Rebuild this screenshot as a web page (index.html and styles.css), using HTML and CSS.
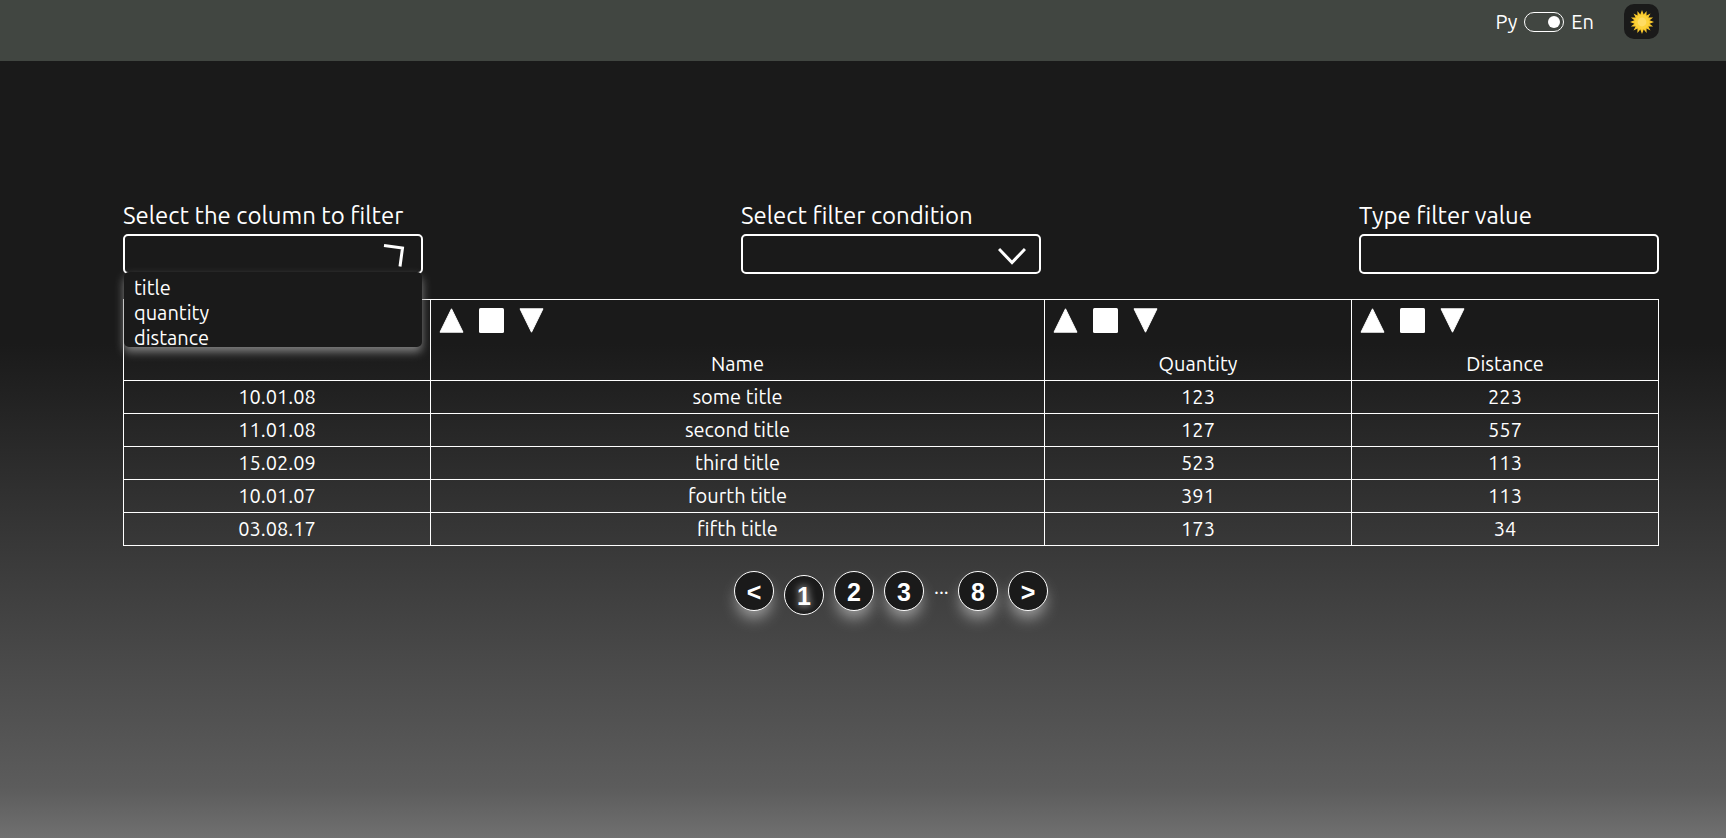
FILE: index.html
```
<!DOCTYPE html>
<html lang="en">
<head>
<meta charset="utf-8">
<title>Table</title>
<link rel="stylesheet" href="styles.css">
</head>
<body>
<svg class="sprite" aria-hidden="true">
  <symbol id="up" viewBox="0 0 25 25"><path d="M12.5 .8 24 24.2H1Z" fill="#fff" stroke="#fff" stroke-width="1" stroke-linejoin="round"/></symbol>
  <symbol id="square" viewBox="0 0 25 25"><rect width="25" height="25" rx="1.5" fill="#fff"/></symbol>
  <symbol id="down" viewBox="0 0 25 25"><path d="M12.5 24.2 24 .8H1Z" fill="#fff" stroke="#fff" stroke-width="1" stroke-linejoin="round"/></symbol>
</svg>
<header class="header">
  <div class="lang">
    <label for="lang">Py</label>
    <input class="lang-toggle" id="lang" type="checkbox" checked>
    <label for="lang">En</label>
  </div>
  <button class="theme" type="button" aria-label="Switch theme">
    <svg class="theme-icon" viewBox="-12 -12 24 24">
      <polygon fill="#fbc92b" points="0,-12 1.7,-7.6 4.6,-11.1 4.5,-6.4 8.5,-8.5 6.4,-4.5 11.1,-4.6 7.6,-1.7 12,0 7.6,1.7 11.1,4.6 6.4,4.5 8.5,8.5 4.5,6.4 4.6,11.1 1.7,7.6 0,12 -1.7,7.6 -4.6,11.1 -4.5,6.4 -8.5,8.5 -6.4,4.5 -11.1,4.6 -7.6,1.7 -12,0 -7.6,-1.7 -11.1,-4.6 -6.4,-4.5 -8.5,-8.5 -4.5,-6.4 -4.6,-11.1 -1.7,-7.6"/>
      <circle r="7.2" fill="#fdd23a"/>
      <circle r="4.4" fill="#ffdc63"/>
    </svg>
  </button>
</header>
<main class="main">
  <form class="filters">
    <div class="field">
      <label class="field-label" for="column">Select the column to filter</label>
      <div class="select-wrap">
        <select class="control" id="column"><option></option></select>
        <svg class="chevron" viewBox="0 0 28 28" aria-hidden="true"><path d="M4 4.5 22.5 7 20 25.5" fill="none" stroke="#fff" stroke-width="3"/></svg>
        <ul class="options" role="listbox" aria-label="Columns">
          <li class="option" role="option">title</li>
          <li class="option" role="option">quantity</li>
          <li class="option" role="option">distance</li>
        </ul>
      </div>
    </div>
    <div class="field">
      <label class="field-label" for="condition">Select filter condition</label>
      <div class="select-wrap">
        <select class="control" id="condition"><option></option></select>
        <svg class="chevron" viewBox="0 0 28 28" aria-hidden="true"><path d="M1 8 14 21.5 27 8" fill="none" stroke="#fff" stroke-width="3"/></svg>
      </div>
    </div>
    <div class="field">
      <label class="field-label" for="value">Type filter value</label>
      <input class="control" id="value" type="text">
    </div>
  </form>
  <table class="table">
    <colgroup><col class="col"><col class="col-wide"><col class="col"><col class="col"></colgroup>
    <thead>
      <tr>
        <th class="head"></th>
        <th class="head">
          <div class="sort">
            <button class="sort-btn" type="button" aria-label="Ascending"><svg><use href="#up"/></svg></button>
            <button class="sort-btn" type="button" aria-label="No sorting"><svg><use href="#square"/></svg></button>
            <button class="sort-btn" type="button" aria-label="Descending"><svg><use href="#down"/></svg></button>
          </div>
          Name
        </th>
        <th class="head">
          <div class="sort">
            <button class="sort-btn" type="button" aria-label="Ascending"><svg><use href="#up"/></svg></button>
            <button class="sort-btn" type="button" aria-label="No sorting"><svg><use href="#square"/></svg></button>
            <button class="sort-btn" type="button" aria-label="Descending"><svg><use href="#down"/></svg></button>
          </div>
          Quantity
        </th>
        <th class="head">
          <div class="sort">
            <button class="sort-btn" type="button" aria-label="Ascending"><svg><use href="#up"/></svg></button>
            <button class="sort-btn" type="button" aria-label="No sorting"><svg><use href="#square"/></svg></button>
            <button class="sort-btn" type="button" aria-label="Descending"><svg><use href="#down"/></svg></button>
          </div>
          Distance
        </th>
      </tr>
    </thead>
    <tbody>
      <tr><td>10.01.08</td><td>some title</td><td>123</td><td>223</td></tr>
      <tr><td>11.01.08</td><td>second title</td><td>127</td><td>557</td></tr>
      <tr><td>15.02.09</td><td>third title</td><td>523</td><td>113</td></tr>
      <tr><td>10.01.07</td><td>fourth title</td><td>391</td><td>113</td></tr>
      <tr><td>03.08.17</td><td>fifth title</td><td>173</td><td>34</td></tr>
    </tbody>
  </table>
  <nav class="pages" aria-label="Pages">
    <button class="page" type="button">&lt;</button>
    <button class="page page-active" type="button">1</button>
    <button class="page" type="button">2</button>
    <button class="page" type="button">3</button>
    <span class="dots">...</span>
    <button class="page" type="button">8</button>
    <button class="page" type="button">&gt;</button>
  </nav>
</main>
</body>
</html>
```
FILE: styles.css
```
* {
  box-sizing: border-box;
}

body {
  min-height: 100vh;
  margin: 0;
  color: #fff;
  font-family: Ubuntu, "Noto Sans", sans-serif;
  font-size: 20px;
  background: linear-gradient(#1a1a1a 0%, #1a1a1a 41%, #5c5c5c 94%, #707070 100%) no-repeat;
}

button {
  padding: 0;
  border: 0;
  color: inherit;
  cursor: pointer;
}

.sprite {
  position: absolute;
  width: 0;
  height: 0;
}

.header {
  display: flex;
  justify-content: flex-end;
  align-items: flex-start;
  gap: 30px;
  height: 61px;
  padding: 4px 67px 0;
  background: #414641;
}

.lang {
  display: flex;
  align-items: center;
  gap: 7px;
  height: 35px;
}

.lang-toggle {
  appearance: none;
  display: flex;
  justify-content: flex-end;
  align-items: center;
  width: 40px;
  height: 20px;
  margin: 0;
  padding: 0 3px;
  border: 1px solid #fff;
  border-radius: 10px;
}

.lang-toggle::before {
  content: "";
  width: 12px;
  height: 12px;
  border-radius: 50%;
  background: #fff;
}

.theme {
  display: grid;
  place-items: center;
  width: 35px;
  height: 35px;
  border-radius: 10px;
  background: #1a1a1a;
}

.theme-icon {
  width: 24px;
  height: 24px;
}

.main {
  padding: 139px 67px 0 123px;
}

.filters {
  display: flex;
  justify-content: space-between;
  margin-bottom: 25px;
}

.field {
  display: flex;
  flex-direction: column;
  gap: 2px;
  width: 300px;
}

.field-label {
  font-size: 24px;
  line-height: 32px;
}

.select-wrap {
  position: relative;
  display: flex;
}

.control {
  appearance: none;
  width: 100%;
  height: 40px;
  padding: 0 10px;
  border: 2px solid #fff;
  border-radius: 5px;
  color: #fff;
  font: inherit;
  background: #1a1a1a;
}

.chevron {
  position: absolute;
  top: 7px;
  right: 15px;
  width: 28px;
  height: 28px;
  pointer-events: none;
}

.options {
  position: absolute;
  top: 38px;
  left: 1px;
  right: 1px;
  height: 75px;
  margin: 0;
  padding: 3px 10px 0;
  border-radius: 5px;
  list-style: none;
  background: #1a1a1a;
  box-shadow: 0 5px 10px #808080;
}

.option {
  line-height: 25px;
}

.table {
  width: 100%;
  table-layout: fixed;
  border-collapse: collapse;
  text-align: center;
}

.col {
  width: 20%;
}

.col-wide {
  width: 40%;
}

.table th,
.table td {
  height: 33px;
  padding: 0 0 1px;
  border: 1px solid #fff;
  font-weight: 400;
  line-height: 31px;
}

.table .head {
  height: 81px;
}

.sort {
  display: flex;
  gap: 15px;
  padding: 8px 8px 15px;
}

.sort-btn {
  display: flex;
  width: 25px;
  height: 25px;
  background: none;
}

.sort-btn svg {
  width: 25px;
  height: 25px;
}

.pages {
  display: flex;
  justify-content: center;
  gap: 10px;
  margin-top: 25px;
}

.page {
  width: 40px;
  height: 40px;
  padding-top: 2px;
  border: 1px solid #fff;
  border-radius: 50%;
  font: bold 25px "Liberation Sans", Arial, sans-serif;
  background: #1a1a1a;
  box-shadow: 0 10px 15px -3px #a0a0a0;
}

.page-active {
  margin-top: 4px;
  text-shadow: 0 0 8px #fff;
  box-shadow: none;
}

.dots {
  width: 14px;
  line-height: 32px;
}
```
